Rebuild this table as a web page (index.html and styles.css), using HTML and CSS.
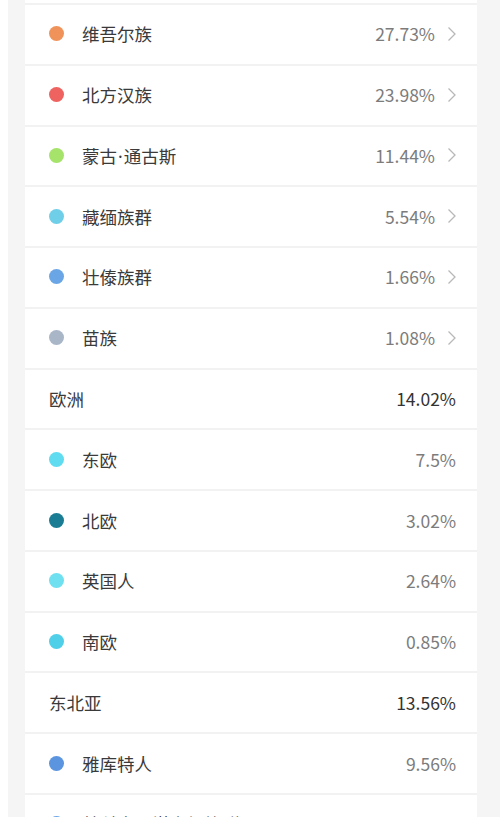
FILE: index.html
```html
<!DOCTYPE html>
<html lang="zh">
<head>
<meta charset="utf-8">
<link rel="stylesheet" href="styles.css">
</head>
<body>
<div class="page">
  <div class="card">
    <div class="row sub link"><span class="dot" style="background:#f0935a"></span><span class="name">维吾尔族</span><span class="pct">27.73%</span><span class="chev"><svg width="10" height="16" viewBox="0 0 10 16"><path d="M1.5 1.5 L8 8 L1.5 14.5" fill="none" stroke="#b8b8b8" stroke-width="1.3"/></svg></span></div>
    <div class="row sub link"><span class="dot" style="background:#ee6360"></span><span class="name">北方汉族</span><span class="pct">23.98%</span><span class="chev"><svg width="10" height="16" viewBox="0 0 10 16"><path d="M1.5 1.5 L8 8 L1.5 14.5" fill="none" stroke="#b8b8b8" stroke-width="1.3"/></svg></span></div>
    <div class="row sub link"><span class="dot" style="background:#a6e36a"></span><span class="name">蒙古<span class="sep">·</span>通古斯</span><span class="pct">11.44%</span><span class="chev"><svg width="10" height="16" viewBox="0 0 10 16"><path d="M1.5 1.5 L8 8 L1.5 14.5" fill="none" stroke="#b8b8b8" stroke-width="1.3"/></svg></span></div>
    <div class="row sub link"><span class="dot" style="background:#6fcfe9"></span><span class="name">藏缅族群</span><span class="pct">5.54%</span><span class="chev"><svg width="10" height="16" viewBox="0 0 10 16"><path d="M1.5 1.5 L8 8 L1.5 14.5" fill="none" stroke="#b8b8b8" stroke-width="1.3"/></svg></span></div>
    <div class="row sub link"><span class="dot" style="background:#6aa6e6"></span><span class="name">壮傣族群</span><span class="pct">1.66%</span><span class="chev"><svg width="10" height="16" viewBox="0 0 10 16"><path d="M1.5 1.5 L8 8 L1.5 14.5" fill="none" stroke="#b8b8b8" stroke-width="1.3"/></svg></span></div>
    <div class="row sub link"><span class="dot" style="background:#a9b6c8"></span><span class="name">苗族</span><span class="pct">1.08%</span><span class="chev"><svg width="10" height="16" viewBox="0 0 10 16"><path d="M1.5 1.5 L8 8 L1.5 14.5" fill="none" stroke="#b8b8b8" stroke-width="1.3"/></svg></span></div>
    <div class="row head"><span class="name">欧洲</span><span class="pct">14.02%</span></div>
    <div class="row sub"><span class="dot" style="background:#5fdcf0"></span><span class="name">东欧</span><span class="pct">7.5%</span></div>
    <div class="row sub"><span class="dot" style="background:#1b7d94"></span><span class="name">北欧</span><span class="pct">3.02%</span></div>
    <div class="row sub"><span class="dot" style="background:#6ee0f0"></span><span class="name">英国人</span><span class="pct">2.64%</span></div>
    <div class="row sub"><span class="dot" style="background:#4fcfe8"></span><span class="name">南欧</span><span class="pct">0.85%</span></div>
    <div class="row head"><span class="name">东北亚</span><span class="pct">13.56%</span></div>
    <div class="row sub"><span class="dot" style="background:#5b95e0"></span><span class="name">雅库特人</span><span class="pct">9.56%</span></div>
    <div class="row sub link"><span class="dot" style="background:#6aa6e6"></span><span class="name">楚科奇·堪察加族群</span><span class="pct">2.86%</span><span class="chev"><svg width="10" height="16" viewBox="0 0 10 16"><path d="M1.5 1.5 L8 8 L1.5 14.5" fill="none" stroke="#b8b8b8" stroke-width="1.3"/></svg></span></div>
  </div>
</div>
</body>
</html>
```

FILE: styles.css
```css
html, body {
  margin: 0;
  padding: 0;
  background: #ffffff;
  overflow: hidden;
}
.page {
  margin-left: 8px;
  background: #f5f5f5;
  padding: 0 23px 0 17px;
  height: 817px;
  overflow: hidden;
}
.card {
  background: #ffffff;
  padding-top: 3px;
  font-family: "Noto Sans CJK SC", "Noto Sans", sans-serif;
}
.row {
  box-sizing: border-box;
  height: 60.77px;
  border-top: 2px solid #f2f2f2;
  display: flex;
  align-items: center;
  padding: 0 21px 1px 24px;
  font-size: 17.5px;
}
.dot {
  width: 15px;
  height: 15px;
  border-radius: 50%;
  flex: none;
  margin-right: 18px;
}
.name {
  flex: 1;
  color: #3a3a3a;
}
.sep {
  font-family: "Noto Sans", sans-serif;
  margin: 0 1px;
}
.pct {
  color: #7c7c7c;
}
.head .pct {
  color: #333333;
}
.chev {
  display: flex;
  margin-left: 12px;
  margin-right: -1px;
}
```
